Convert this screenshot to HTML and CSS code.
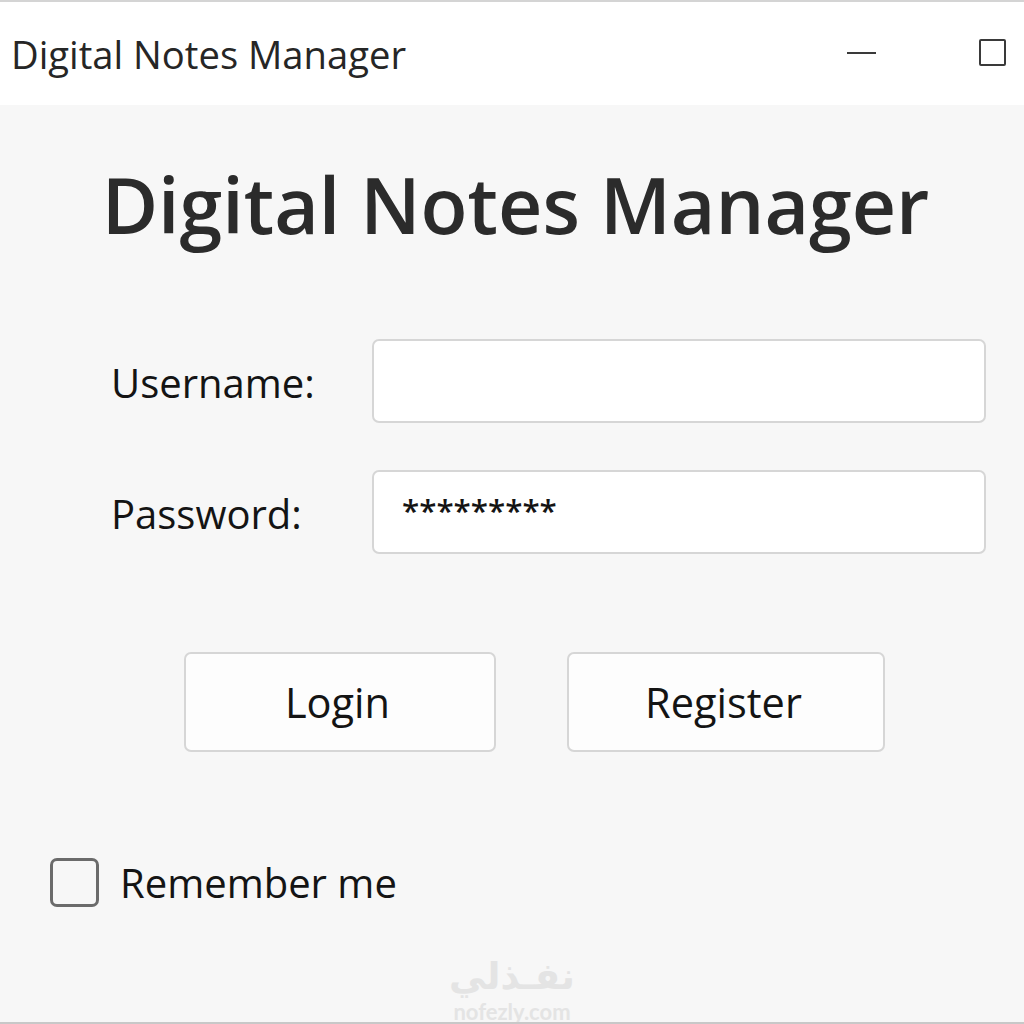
FILE: index.html
```html
<!DOCTYPE html>
<html lang="en">

<head>
  <meta charset="UTF-8">
  <meta name="viewport" content="width=device-width, initial-scale=1.0">
  <title>Digital Notes Manager</title>
  <link rel="stylesheet" href="styles.css">
</head>

<body>

  <div class="window">
    <div class="title-bar">
      <span class="title-text">Digital Notes Manager</span>
      <div class="window-controls">
        <span class="minimize-icon"></span>
        <span class="maximize-icon"></span>
      </div>
    </div>

    <div class="content">
      <h1 class="heading">Digital Notes Manager</h1>

      <div class="form">
        <div class="form-row">
          <label class="form-label" for="username">Username:</label>
          <input class="form-input" id="username" type="text">
        </div>
        <div class="form-row">
          <label class="form-label" for="password">Password:</label>
          <input class="form-input form-input-password" id="password" type="text" value="*********">
        </div>
      </div>

      <div class="button-row">
        <button class="button button-login">Login</button>
        <button class="button button-register">Register</button>
      </div>

      <div class="remember">
        <span class="checkbox"></span>
        <span class="remember-text">Remember me</span>
      </div>

      <div class="watermark">
        <div class="watermark-arabic" lang="ar" dir="rtl">نفـذلي</div>
        <div class="watermark-latin">nofezly.com</div>
      </div>
    </div>
  </div>

</body>

</html>
```

FILE: styles.css
```css
* {
  box-sizing: border-box;
}

body {
  margin: 0;
  font-family: 'Open Sans', 'Noto Sans', sans-serif;
  color: #141414;
}

.window {
  display: flex;
  flex-direction: column;
  height: 1024px;
  overflow: hidden;
  background-color: #f7f7f7;
  border-top: 2px solid #d4d4d4;
  border-bottom: 2px solid #c8c8c8;
}

.title-bar {
  display: flex;
  flex-shrink: 0;
  align-items: center;
  justify-content: space-between;
  height: 103px;
  padding: 0 18px 2px 11px;
  background-color: #fff;
}

.title-text {
  padding-top: 2px;
  font-size: 38.2px;
  color: #262626;
}

.window-controls {
  display: flex;
  align-items: center;
  gap: 103px;
}

.minimize-icon {
  width: 29px;
  height: 2px;
  background-color: #3a3a3a;
}

.maximize-icon {
  width: 27px;
  height: 27px;
  border: 2px solid #3a3a3a;
  border-radius: 2px;
}

.content {
  display: flex;
  flex-direction: column;
  flex: 1;
  min-height: 0;
  padding-top: 54px;
}

.heading {
  margin: 0;
  padding-left: 7px;
  font-size: 77px;
  font-weight: 600;
  line-height: 92px;
  text-align: center;
  color: #2b2b2b;
}

.form {
  display: flex;
  flex-direction: column;
  gap: 47px;
  margin-top: 88px;
  padding: 0 38px 0 111px;
}

.form-row {
  display: flex;
  align-items: center;
}

.form-label {
  width: 261px;
  padding-top: 3px;
  font-size: 40px;
}

.form-input {
  flex: 1;
  height: 84px;
  padding: 0 28px;
  font-family: inherit;
  font-size: 36px;
  color: #141414;
  background-color: #fff;
  border: 2px solid #d6d6d6;
  border-radius: 7px;
}

.form-input-password {
  padding-bottom: 6px;
  font-size: 31.4px;
  font-weight: 600;
}

.button-row {
  display: flex;
  gap: 71px;
  margin-top: 98px;
  padding-left: 184px;
}

.button {
  height: 100px;
  padding: 0 5px 0 0;
  font-family: inherit;
  font-size: 41.5px;
  color: #141414;
  background-color: #fdfdfd;
  border: 2px solid #d6d6d6;
  border-radius: 7px;
}

.button-login {
  width: 312px;
}

.button-register {
  width: 318px;
}

.remember {
  display: flex;
  align-items: center;
  gap: 21px;
  margin-top: 103px;
  padding-left: 50px;
}

.checkbox {
  width: 49px;
  height: 49px;
  border: 3px solid #6b6b6b;
  border-radius: 7px;
}

.remember-text {
  font-size: 40px;
}

.watermark {
  margin-top: 45px;
  text-align: center;
  color: #e4e4e4;
}

.watermark-arabic {
  font-family: 'DejaVu Sans', sans-serif;
  font-size: 37px;
  font-weight: bold;
  line-height: 44px;
}

.watermark-latin {
  font-family: 'Lato', sans-serif;
  font-size: 22px;
  font-weight: 700;
  line-height: 26px;
}
```
